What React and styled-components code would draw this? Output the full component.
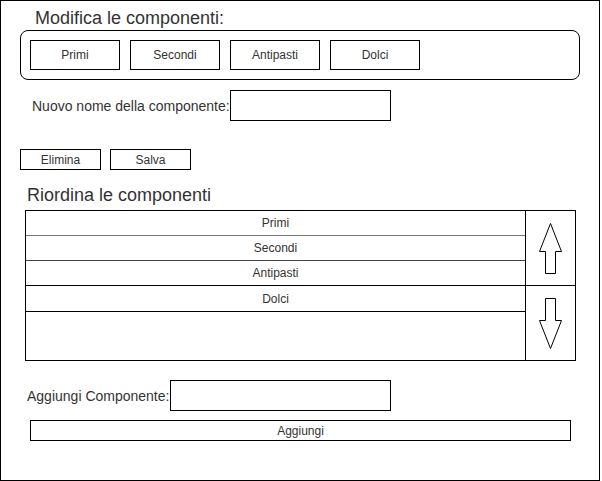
import React from 'react';
import styled, { createGlobalStyle } from 'styled-components';

const GlobalStyle = createGlobalStyle`
    body{
        margin: 0;
        background: #fff;
        font-family: Arial, "Liberation Sans", Helvetica, sans-serif;
        color: #333;
    }
`;

const Frame = styled.div`
    box-sizing: border-box;
    width: 600px;
    height: 481px;
    border: 1px solid #000;
    display: flex;
    flex-direction: column;
    align-items: flex-start;
`;

const Heading = styled.div`
    font-size: 18px;
    line-height: 20px;
    margin: ${p => p.$top}px 0 0 ${p => p.$left}px;
    white-space: nowrap;
`;

const Group = styled.div`
    box-sizing: border-box;
    margin: 2px 0 0 19px;
    width: 560px;
    height: 50px;
    border: 1px solid #000;
    border-radius: 8px;
    padding: 9px;
    display: flex;
    gap: 10px;
`;

const Box = styled.div`
    box-sizing: border-box;
    width: ${p => p.$w}px;
    height: ${p => p.$h}px;
    border: 1px solid #000;
    display: flex;
    align-items: center;
    justify-content: center;
    font-size: 12px;
    flex-shrink: 0;
`;

const FieldRow = styled.div`
    display: flex;
    align-items: center;
    gap: ${p => p.$gap}px;
    margin: ${p => p.$top}px 0 0 ${p => p.$left}px;
`;

const Label = styled.span`
    font-size: 14px;
    white-space: nowrap;
`;

const Input = styled.div`
    box-sizing: border-box;
    width: ${p => p.$w}px;
    height: 31px;
    border: 1px solid #000;
`;

const Actions = styled.div`
    display: flex;
    gap: 9px;
    margin: 28px 0 0 19px;
`;

const List = styled.div`
    box-sizing: border-box;
    margin: 5px 0 0 24px;
    width: 551px;
    height: 151px;
    border: 1px solid #000;
    display: grid;
    grid-template-columns: 1fr 50px;
`;

const Rows = styled.div`
    display: flex;
    flex-direction: column;
`;

const Row = styled.div`
    box-sizing: border-box;
    height: ${p => p.$h}px;
    border-bottom: 1px solid ${p => p.$line};
    display: flex;
    align-items: center;
    justify-content: center;
    font-size: 12px;
`;

const Arrows = styled.div`
    border-left: 1px solid #000;
    display: grid;
    grid-template-rows: 75px 1fr;
`;

const ArrowCell = styled.div`
    display: flex;
    align-items: center;
    justify-content: center;
    border-bottom: ${p => (p.$split ? '1px solid #000' : 'none')};
`;

const Wide = styled(Box)`
    margin: 9px 0 0 29px;
`;

const Arrow = ({ down }) => (
    <svg width="23" height="51" viewBox="0 0 23 51" style={{ transform: down ? 'rotate(180deg)' : 'none' }}>
        <polygon
            points="11.5,0.5 0.5,28.5 6.5,28.5 6.5,50.5 16.5,50.5 16.5,28.5 22.5,28.5"
            fill="#fff"
            stroke="#000"
            strokeWidth="1"
        />
    </svg>
);

const components = ['Primi', 'Secondi', 'Antipasti', 'Dolci'];
const lines = ['#777', '#444', '#000', '#000'];

export default function App(){
    return(
        <React.Fragment>
            <GlobalStyle />
            <Frame>
                <Heading $top={7} $left={34}>Modifica le componenti:</Heading>
                <Group>
                    {components.map((c) => (
                        <Box key={c} $w={90} $h={30}>{c}</Box>
                    ))}
                </Group>
                <FieldRow $top={10} $left={31} $gap={0}>
                    <Label>Nuovo nome della componente:</Label>
                    <Input $w={161} />
                </FieldRow>
                <Actions>
                    <Box $w={81} $h={21}>Elimina</Box>
                    <Box $w={81} $h={21}>Salva</Box>
                </Actions>
                <Heading $top={15} $left={26}>Riordina le componenti</Heading>
                <List>
                    <Rows>
                        {components.map((c, i) => (
                            <Row key={c} $h={i === 3 ? 26 : 25} $line={lines[i]}>{c}</Row>
                        ))}
                    </Rows>
                    <Arrows>
                        <ArrowCell $split><Arrow /></ArrowCell>
                        <ArrowCell><Arrow down /></ArrowCell>
                    </Arrows>
                </List>
                <FieldRow $top={19} $left={26} $gap={1}>
                    <Label>Aggiungi Componente:</Label>
                    <Input $w={221} />
                </FieldRow>
                <Wide $w={541} $h={21}>Aggiungi</Wide>
            </Frame>
        </React.Fragment>
    )
}
